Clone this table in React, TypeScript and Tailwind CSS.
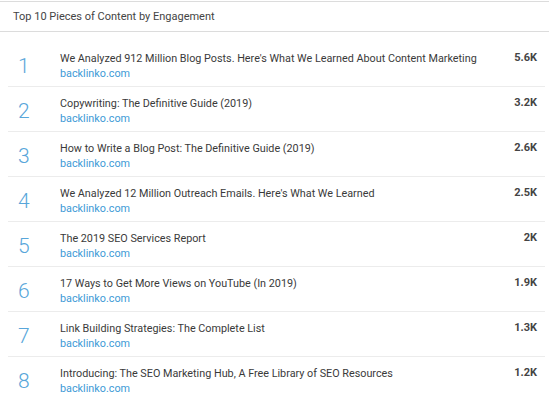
import React from "react";

type Item = { title: string; domain: string; value: string };

const items: Item[] = [
  { title: "We Analyzed 912 Million Blog Posts. Here's What We Learned About Content Marketing", domain: "backlinko.com", value: "5.6K" },
  { title: "Copywriting: The Definitive Guide (2019)", domain: "backlinko.com", value: "3.2K" },
  { title: "How to Write a Blog Post: The Definitive Guide (2019)", domain: "backlinko.com", value: "2.6K" },
  { title: "We Analyzed 12 Million Outreach Emails. Here's What We Learned", domain: "backlinko.com", value: "2.5K" },
  { title: "The 2019 SEO Services Report", domain: "backlinko.com", value: "2K" },
  { title: "17 Ways to Get More Views on YouTube (In 2019)", domain: "backlinko.com", value: "1.9K" },
  { title: "Link Building Strategies: The Complete List", domain: "backlinko.com", value: "1.3K" },
  { title: "Introducing: The SEO Marketing Hub, A Free Library of SEO Resources", domain: "backlinko.com", value: "1.2K" },
];

const App = () => {
  return (
    <div className="h-[400px] w-[549px] overflow-hidden bg-white font-['Roboto',sans-serif]">
      {/* header */}
      <div className="mt-[1px] flex h-[31px] items-center border-t border-b border-[#dcdcdc] pl-[13px] pt-[1px] text-[11px] text-[#444]">
        Top 10 Pieces of Content by Engagement
      </div>

      {/* list */}
      <div className="ml-[8px] mr-[4px] mt-[10px]">
        {items.map((item, i) => (
          <div
            key={i}
            className="flex h-[45px] items-center border-b border-[#ececec] pt-[3px]"
          >
            <div className="w-[52px] pl-[10px] pt-[1px] text-[21px] font-light leading-none text-[#58a6da]">
              {i + 1}
            </div>
            <div className="flex flex-1 flex-col">
              <span className="text-[10.8px] leading-[15px] text-[#3a3a3a]">
                {item.title}
              </span>
              <span className="text-[10.8px] leading-[15px] text-[#3d9ad6]">
                {item.domain}
              </span>
            </div>
            <div className="mb-[15px] pr-[8px] text-[11px] font-bold text-[#444]">
              {item.value}
            </div>
          </div>
        ))}
      </div>
    </div>
  );
};

export default App;
